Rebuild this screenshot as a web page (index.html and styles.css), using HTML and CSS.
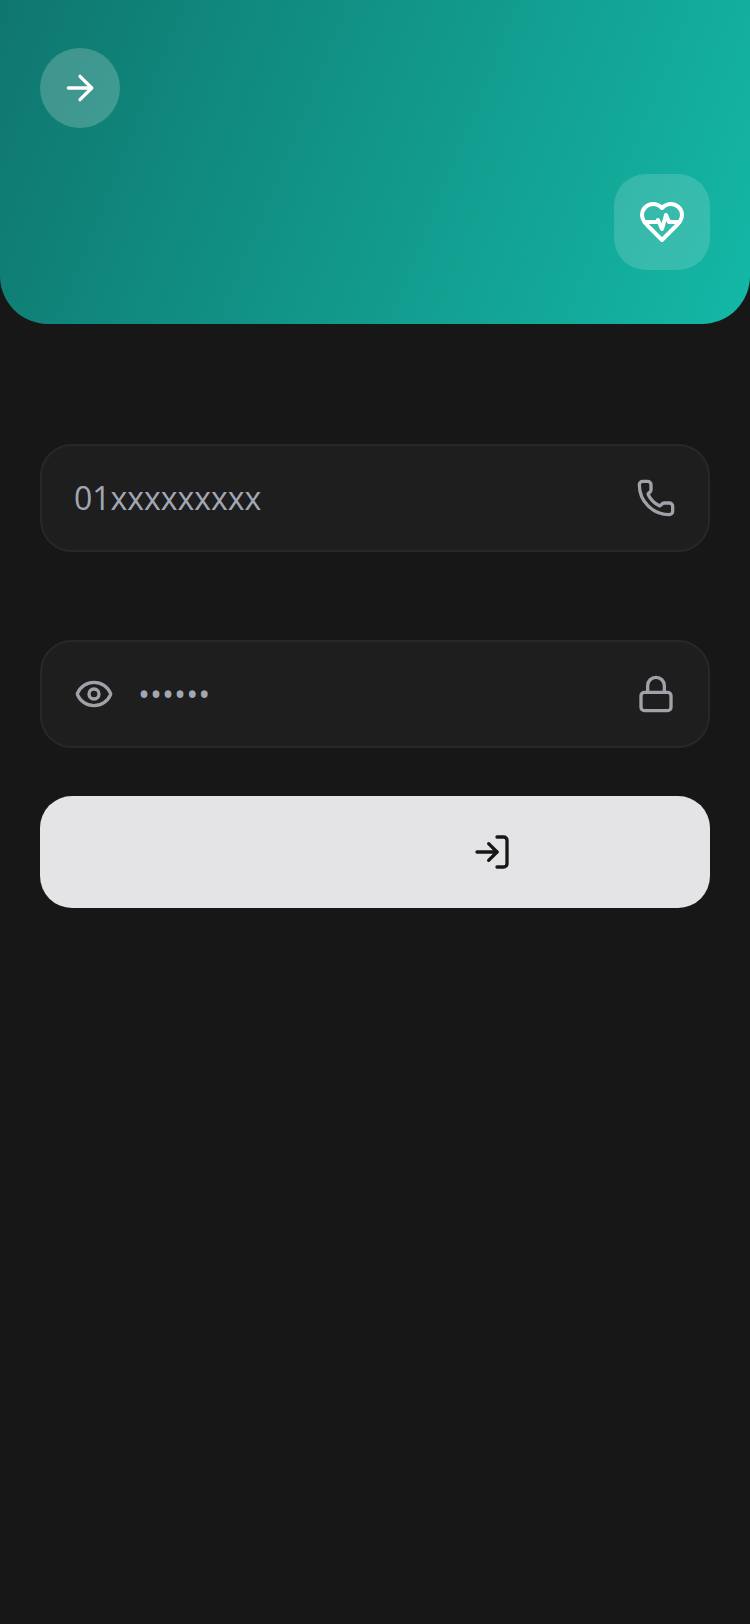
FILE: index.html
```html
<!DOCTYPE html>
<html lang="en">
<head>
<meta charset="utf-8">
<title>Login</title>
<link rel="stylesheet" href="styles.css">
</head>
<body>
<header class="hero">
  <button class="back" type="button" aria-label="Back">
    <svg class="icon" viewBox="0 0 24 24"><path d="M5 12h14"/><path d="m12 5 7 7-7 7"/></svg>
  </button>
  <div class="logo">
    <svg class="icon icon-lg" viewBox="0 0 24 24"><path d="M19 14c1.49-1.46 3-3.21 3-5.5A5.5 5.5 0 0 0 16.5 3c-1.76 0-3 .5-4.5 2-1.5-1.5-2.74-2-4.5-2A5.5 5.5 0 0 0 2 8.5c0 2.3 1.5 4.05 3 5.5l7 7Z"/><path d="M3.22 12H9.5l.5-1 2 4.5 2-7 1.5 3.5h5.27"/></svg>
  </div>
</header>
<main class="form">
  <label class="field field-phone">
    <input class="input" type="text" placeholder="01xxxxxxxxx">
    <svg class="icon" viewBox="0 0 24 24"><path d="M13.832 16.568a1 1 0 0 0 1.213-.303l.355-.465A2 2 0 0 1 17 15h3a2 2 0 0 1 2 2v3a2 2 0 0 1-2 2A18 18 0 0 1 2 4a2 2 0 0 1 2-2h3a2 2 0 0 1 2 2v3a2 2 0 0 1-.8 1.6l-.468.351a1 1 0 0 0-.292 1.233 14 14 0 0 0 6.392 6.384"/></svg>
  </label>
  <label class="field field-pass">
    <svg class="icon" viewBox="0 0 24 24"><path d="M2.062 12.348a1 1 0 0 1 0-.696 10.75 10.75 0 0 1 19.876 0 1 1 0 0 1 0 .696 10.75 10.75 0 0 1-19.876 0"/><circle cx="12" cy="12" r="3"/></svg>
    <input class="input input-pass" type="text" placeholder="••••••">
    <svg class="icon" viewBox="0 0 24 24"><rect x="3" y="11" width="18" height="11" rx="2" ry="2"/><path d="M7 11V7a5 5 0 0 1 10 0v4"/></svg>
  </label>
  <button class="submit" type="button" aria-label="Log in">
    <svg class="icon" viewBox="0 0 24 24"><path d="M15 3h4a2 2 0 0 1 2 2v14a2 2 0 0 1-2 2h-4"/><path d="m10 17 5-5-5-5"/><path d="M15 12H3"/></svg>
  </button>
</main>
</body>
</html>
```
FILE: styles.css
```css
* { box-sizing: border-box; }
html, body { margin: 0; height: 100%; }
body {
  background: #171717;
  font-family: "Open Sans", sans-serif;
  overflow: hidden;
}
.icon {
  width: 40px;
  height: 40px;
  flex: none;
  fill: none;
  stroke: currentColor;
  stroke-width: 2;
  stroke-linecap: round;
  stroke-linejoin: round;
  display: block;
}
.icon-lg { width: 48px; height: 48px; }
.hero {
  height: 324px;
  padding: 48px 40px 54px;
  display: flex;
  flex-direction: column;
  justify-content: space-between;
  background: linear-gradient(112deg, #0f766e, #14b8a6);
  border-radius: 0 0 48px 48px;
  color: #fff;
}
.back {
  width: 80px;
  height: 80px;
  padding: 0;
  border: 0;
  border-radius: 50%;
  background: rgba(255, 255, 255, 0.2);
  color: #fff;
  display: flex;
  align-items: center;
  justify-content: center;
}
.logo {
  width: 96px;
  height: 96px;
  align-self: flex-end;
  border-radius: 32px;
  background: rgba(255, 255, 255, 0.15);
  display: flex;
  align-items: center;
  justify-content: center;
}
.form {
  padding: 120px 40px 0;
  display: flex;
  flex-direction: column;
}
.field {
  height: 108px;
  padding: 32px;
  border: 2px solid #282828;
  border-radius: 32px;
  background: #1e1e1e;
  color: #a1a1aa;
  display: flex;
  align-items: center;
}
.field-pass { margin-top: 88px; gap: 24px; }
.input {
  flex: 1;
  min-width: 0;
  padding: 0;
  border: 0;
  outline: 0;
  background: transparent;
  font: 400 32px/40px "Open Sans", sans-serif;
  color: #e4e4e7;
}
.input::placeholder { color: #a1a7b3; opacity: 1; }
.submit {
  height: 112px;
  margin-top: 48px;
  padding: 0 198px 0 0;
  border: 0;
  border-radius: 32px;
  background: #e4e4e7;
  color: #171717;
  display: flex;
  align-items: center;
  justify-content: flex-end;
}
```
